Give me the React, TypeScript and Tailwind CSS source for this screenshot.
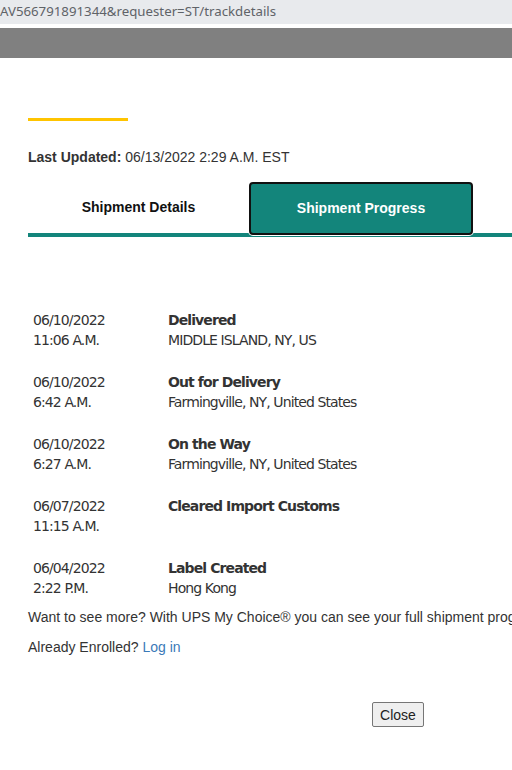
import React from "react";

const events = [
  { date: "06/10/2022", time: "11:06 A.M.", title: "Delivered", loc: "MIDDLE ISLAND, NY, US" },
  { date: "06/10/2022", time: "6:42 A.M.", title: "Out for Delivery", loc: "Farmingville, NY, United States" },
  { date: "06/10/2022", time: "6:27 A.M.", title: "On the Way", loc: "Farmingville, NY, United States" },
  { date: "06/07/2022", time: "11:15 A.M.", title: "Cleared Import Customs", loc: "" },
  { date: "06/04/2022", time: "2:22 P.M.", title: "Label Created", loc: "Hong Kong" },
];

export default function App() {
  return (
    <div className="w-[512px] h-[770px] overflow-hidden bg-white relative">
      <div className="h-[24px] bg-[#e8eaed] text-[#5f6368] text-[13.25px] leading-[22px] whitespace-nowrap" style={{ fontFamily: '"Noto Sans", "Open Sans", sans-serif' }}>
        AV566791891344&amp;requester=ST/trackdetails
      </div>
      <div className="h-[4px] bg-white" />
      <div className="h-[30px] bg-[#808080]" />
      <div className="w-[740px] ml-[28px] font-['Liberation_Sans',Arial,sans-serif] text-[#333]">
        <div className="h-[60px]" />
        <div className="w-[100px] h-[3px] bg-[#ffc400]" />
        <div className="h-[26px]" />
        <div className="text-[14px] leading-[20px] whitespace-nowrap">
          <span className="font-bold">Last Updated:</span> 06/13/2022 2:29 A.M. EST
        </div>
        <div className="h-[15px]" />
        <div className="relative h-[56px]">
          <div className="absolute left-0 right-0 top-[51px] h-[4px] bg-[#13857b]" />
          <div className="absolute left-0 top-0 w-[221px] h-[51px] flex items-center justify-center text-[14px] font-bold text-[#111]">
            Shipment Details
          </div>
          <div className="absolute left-[220px] top-[-1px] w-[226px] h-[55px] bg-white rounded-[5px] p-[1px]">
            <div className="w-full h-full rounded-[4px] border-2 border-[#111] bg-[#13857b] flex items-center justify-center text-[14px] font-bold text-white pb-[1px]">
              Shipment Progress
            </div>
          </div>
        </div>
        <div className="h-[72px]" />
        <div className="flex flex-col gap-[22px] text-[14px] leading-[20px] text-[#333]" style={{ fontFamily: '"DejaVu Sans", Tahoma, sans-serif', letterSpacing: "-0.9px" }}>
          {events.map((e, i) => (
            <div key={i} className="flex">
              <div className="w-[140px] pl-[5px] shrink-0">
                <div>{e.date}</div>
                <div>{e.time}</div>
              </div>
              <div>
                <div className="font-bold">{e.title}</div>
                <div className="h-[20px]">{e.loc}</div>
              </div>
            </div>
          ))}
        </div>
        <div className="h-[9px]" />
        <div className="text-[14px] leading-[20px] whitespace-nowrap text-[#333]">
          Want to see more? With UPS My Choice® you can see your full shipment progress history.
        </div>
        <div className="h-[10px]" />
        <div className="text-[14px] leading-[20px] whitespace-nowrap text-[#333]">
          Already Enrolled? <a className="text-[#3a7ab8]">Log in</a>
        </div>
        <div className="h-[45px]" />
        <div className="flex justify-center">
          <button className="h-[25px] w-[52px] bg-[#efefef] border border-[#767676] rounded-[2px] text-[14px] text-[#222] leading-none">
            Close
          </button>
        </div>
      </div>
    </div>
  );
}
